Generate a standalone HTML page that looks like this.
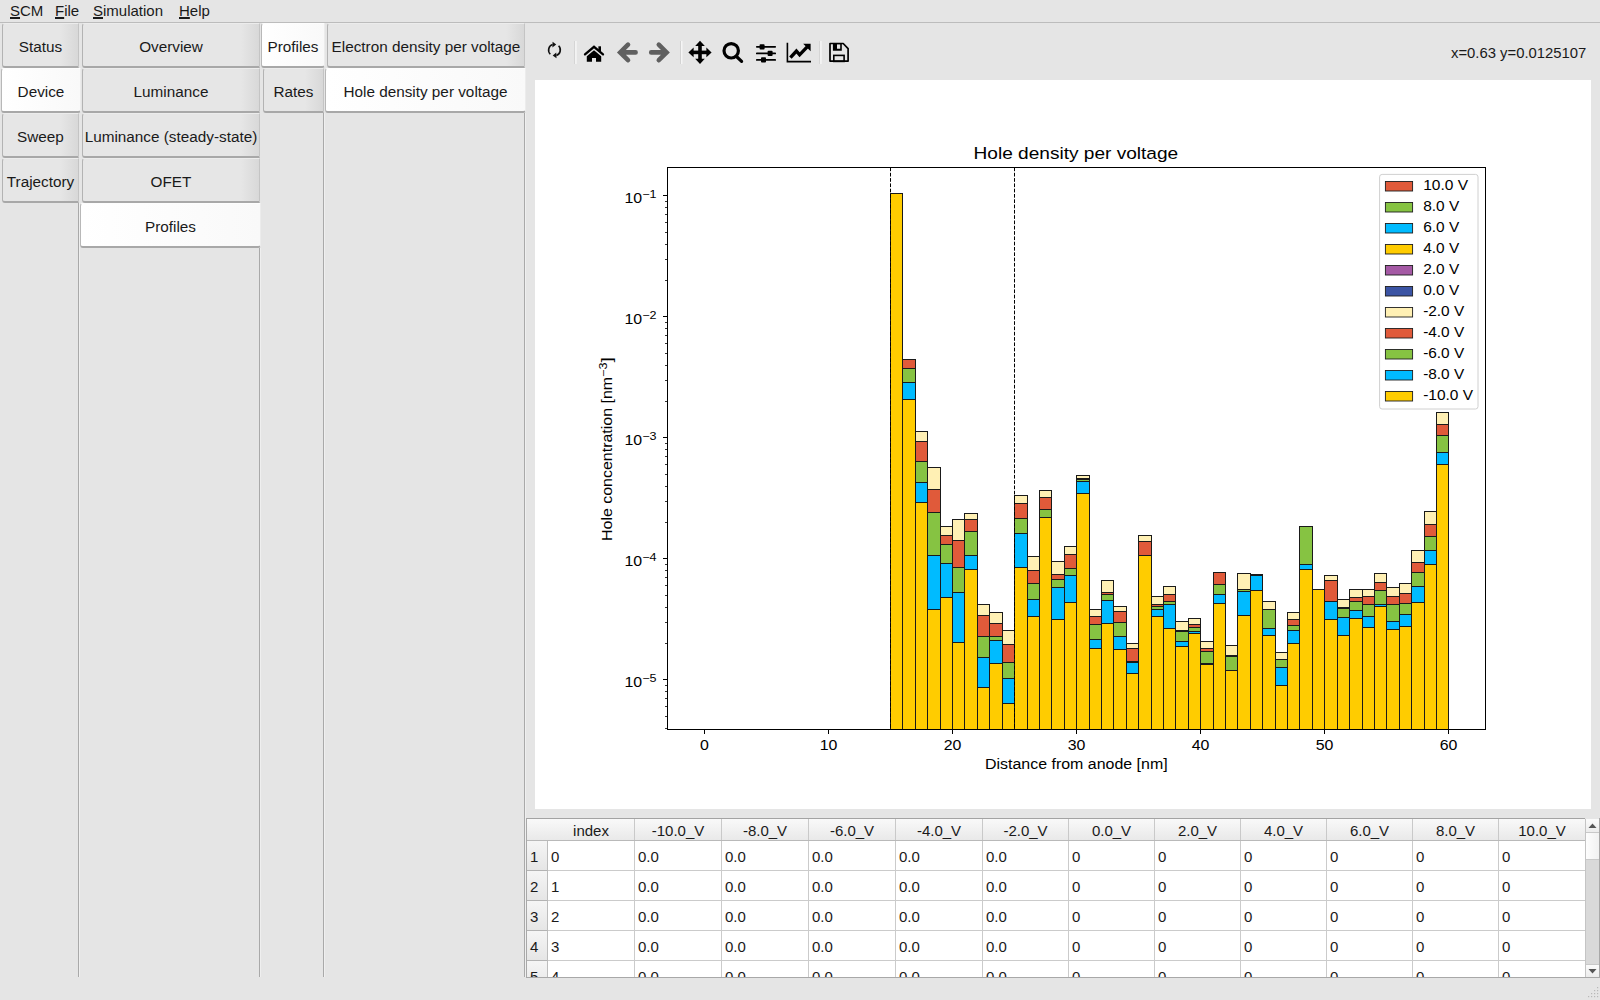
<!DOCTYPE html>
<html><head><meta charset="utf-8">
<style>
*{margin:0;padding:0;box-sizing:border-box}
html,body{width:1600px;height:1000px;overflow:hidden;background:#e5e5e5;font-family:"Liberation Sans",sans-serif;color:#1a1a1a}
.abs{position:absolute}
#menu{position:absolute;left:0;top:0;width:1600px;height:22px;font-size:15px}
#menu span{position:absolute;top:2px}
#menu u{text-decoration:underline;text-underline-offset:1px;text-decoration-thickness:1.5px}
.tab{position:absolute;font-size:15.3px;text-align:center;white-space:nowrap;overflow:hidden;
 background:linear-gradient(to right,#e6e6e6 0%,#e6e6e6 calc(100% - 18px),#d8d8d8 100%);
 border-left:1px solid #b3b3b3;border-right:1px solid #c4c4c4;border-bottom:2px solid #a8a8a8;border-top:1px solid #ececec;border-radius:3px 0 0 3px}
.tab.sel{background:linear-gradient(to right,#ffffff 0%,#f9f9f9 100%);border-left:1px solid #b8b8b8;border-right:1px solid #ececec;border-bottom:2px solid #a8a8a8;border-top:1px solid #fdfdfd;border-radius:3px 0 3px 3px}
.vline2{position:absolute;width:1px;background:#efefef}
.vline{position:absolute;width:1px;background:#a9a9a9}
#canvas{position:absolute;left:535px;top:80px;width:1056px;height:729px;background:#fff}
#table{position:absolute;left:526px;top:818px;width:1059px;height:159px;background:#fff;border-left:1px solid #a8a8a8;border-top:1px solid #a3a3a3;overflow:hidden}
.hdrbg{position:absolute;left:0;top:0;width:1100px;height:22px;background:linear-gradient(#f9f9f9,#e9e9e9);border-bottom:1px solid #b9b9b9}
.th{position:absolute;top:0px;height:21px;line-height:24px;font-size:15px;text-align:center;border-right:1px solid #c9c9c9}
.rh{position:absolute;left:0px;width:21px;height:30px;line-height:32px;font-size:15px;padding-left:3px;background:linear-gradient(#f5f5f5,#e6e6e6);border-bottom:1px solid #b3b3b3;border-right:1px solid #bdbdbd}
.td{position:absolute;height:30px;line-height:32px;font-size:15px;padding-left:3px;border-right:1px solid #cbcbcb;border-bottom:1px solid #cbcbcb;background:#fff}
</style></head><body>
<div class="abs" style="left:0;top:22px;width:1600px;height:1px;background:#bcbcbc"></div>
<div id="menu">
<span style="left:10px"><u>S</u>CM</span>
<span style="left:55px"><u>F</u>ile</span>
<span style="left:93px"><u>S</u>imulation</span>
<span style="left:179px"><u>H</u>elp</span>
</div>
<div class="vline" style="left:78px;top:203px;height:774px"></div>
<div class="vline2" style="left:79px;top:203px;height:774px"></div>
<div class="vline" style="left:259px;top:248px;height:729px"></div>
<div class="vline2" style="left:260px;top:248px;height:729px"></div>
<div class="vline" style="left:323px;top:113px;height:864px"></div>
<div class="vline2" style="left:324px;top:113px;height:864px"></div>
<div class="vline" style="left:524px;top:113px;height:864px"></div>
<div class="vline2" style="left:525px;top:113px;height:864px"></div>
<div class="tab" style="left:2px;top:23px;width:77px;height:45px;line-height:45px">Status</div>
<div class="tab sel" style="left:1px;top:68px;width:80px;height:45px;line-height:45px">Device</div>
<div class="tab" style="left:2px;top:113px;width:77px;height:45px;line-height:45px">Sweep</div>
<div class="tab" style="left:2px;top:158px;width:77px;height:45px;line-height:45px">Trajectory</div>
<div class="tab" style="left:82px;top:23px;width:178px;height:45px;line-height:45px">Overview</div>
<div class="tab" style="left:82px;top:68px;width:178px;height:45px;line-height:45px">Luminance</div>
<div class="tab" style="left:82px;top:113px;width:178px;height:45px;line-height:45px">Luminance (steady-state)</div>
<div class="tab" style="left:82px;top:158px;width:178px;height:45px;line-height:45px">OFET</div>
<div class="tab sel" style="left:80px;top:203px;width:181px;height:45px;line-height:45px">Profiles</div>
<div class="tab sel" style="left:261px;top:23px;width:64px;height:45px;line-height:45px">Profiles</div>
<div class="tab" style="left:263px;top:68px;width:61px;height:45px;line-height:45px">Rates</div>
<div class="tab" style="left:327px;top:23px;width:198px;height:45px;line-height:45px">Electron density per voltage</div>
<div class="tab sel" style="left:325px;top:68px;width:201px;height:45px;line-height:45px">Hole density per voltage</div>
<div id="canvas"></div>
<div id="table"><div class="hdrbg"></div>
<div class="th" style="left:21px;width:87px">index</div>
<div class="th" style="left:108px;width:87px">-10.0_V</div>
<div class="th" style="left:195px;width:87px">-8.0_V</div>
<div class="th" style="left:282px;width:87px">-6.0_V</div>
<div class="th" style="left:369px;width:87px">-4.0_V</div>
<div class="th" style="left:456px;width:86px">-2.0_V</div>
<div class="th" style="left:542px;width:86px">0.0_V</div>
<div class="th" style="left:628px;width:86px">2.0_V</div>
<div class="th" style="left:714px;width:86px">4.0_V</div>
<div class="th" style="left:800px;width:86px">6.0_V</div>
<div class="th" style="left:886px;width:86px">8.0_V</div>
<div class="th" style="left:972px;width:87px">10.0_V</div>
<div class="rh" style="top:22px">1</div>
<div class="td" style="left:21px;top:22px;width:87px">0</div>
<div class="td" style="left:108px;top:22px;width:87px">0.0</div>
<div class="td" style="left:195px;top:22px;width:87px">0.0</div>
<div class="td" style="left:282px;top:22px;width:87px">0.0</div>
<div class="td" style="left:369px;top:22px;width:87px">0.0</div>
<div class="td" style="left:456px;top:22px;width:86px">0.0</div>
<div class="td" style="left:542px;top:22px;width:86px">0</div>
<div class="td" style="left:628px;top:22px;width:86px">0</div>
<div class="td" style="left:714px;top:22px;width:86px">0</div>
<div class="td" style="left:800px;top:22px;width:86px">0</div>
<div class="td" style="left:886px;top:22px;width:86px">0</div>
<div class="td" style="left:972px;top:22px;width:87px">0</div>
<div class="rh" style="top:52px">2</div>
<div class="td" style="left:21px;top:52px;width:87px">1</div>
<div class="td" style="left:108px;top:52px;width:87px">0.0</div>
<div class="td" style="left:195px;top:52px;width:87px">0.0</div>
<div class="td" style="left:282px;top:52px;width:87px">0.0</div>
<div class="td" style="left:369px;top:52px;width:87px">0.0</div>
<div class="td" style="left:456px;top:52px;width:86px">0.0</div>
<div class="td" style="left:542px;top:52px;width:86px">0</div>
<div class="td" style="left:628px;top:52px;width:86px">0</div>
<div class="td" style="left:714px;top:52px;width:86px">0</div>
<div class="td" style="left:800px;top:52px;width:86px">0</div>
<div class="td" style="left:886px;top:52px;width:86px">0</div>
<div class="td" style="left:972px;top:52px;width:87px">0</div>
<div class="rh" style="top:82px">3</div>
<div class="td" style="left:21px;top:82px;width:87px">2</div>
<div class="td" style="left:108px;top:82px;width:87px">0.0</div>
<div class="td" style="left:195px;top:82px;width:87px">0.0</div>
<div class="td" style="left:282px;top:82px;width:87px">0.0</div>
<div class="td" style="left:369px;top:82px;width:87px">0.0</div>
<div class="td" style="left:456px;top:82px;width:86px">0.0</div>
<div class="td" style="left:542px;top:82px;width:86px">0</div>
<div class="td" style="left:628px;top:82px;width:86px">0</div>
<div class="td" style="left:714px;top:82px;width:86px">0</div>
<div class="td" style="left:800px;top:82px;width:86px">0</div>
<div class="td" style="left:886px;top:82px;width:86px">0</div>
<div class="td" style="left:972px;top:82px;width:87px">0</div>
<div class="rh" style="top:112px">4</div>
<div class="td" style="left:21px;top:112px;width:87px">3</div>
<div class="td" style="left:108px;top:112px;width:87px">0.0</div>
<div class="td" style="left:195px;top:112px;width:87px">0.0</div>
<div class="td" style="left:282px;top:112px;width:87px">0.0</div>
<div class="td" style="left:369px;top:112px;width:87px">0.0</div>
<div class="td" style="left:456px;top:112px;width:86px">0.0</div>
<div class="td" style="left:542px;top:112px;width:86px">0</div>
<div class="td" style="left:628px;top:112px;width:86px">0</div>
<div class="td" style="left:714px;top:112px;width:86px">0</div>
<div class="td" style="left:800px;top:112px;width:86px">0</div>
<div class="td" style="left:886px;top:112px;width:86px">0</div>
<div class="td" style="left:972px;top:112px;width:87px">0</div>
<div class="rh" style="top:142px">5</div>
<div class="td" style="left:21px;top:142px;width:87px">4</div>
<div class="td" style="left:108px;top:142px;width:87px">0.0</div>
<div class="td" style="left:195px;top:142px;width:87px">0.0</div>
<div class="td" style="left:282px;top:142px;width:87px">0.0</div>
<div class="td" style="left:369px;top:142px;width:87px">0.0</div>
<div class="td" style="left:456px;top:142px;width:86px">0.0</div>
<div class="td" style="left:542px;top:142px;width:86px">0</div>
<div class="td" style="left:628px;top:142px;width:86px">0</div>
<div class="td" style="left:714px;top:142px;width:86px">0</div>
<div class="td" style="left:800px;top:142px;width:86px">0</div>
<div class="td" style="left:886px;top:142px;width:86px">0</div>
<div class="td" style="left:972px;top:142px;width:87px">0</div></div>
<div class="abs" style="left:1585px;top:819px;width:14px;height:158px;background:#d9d9d9;border-left:1px solid #c4c4c4"></div>
<div class="abs" style="left:1586px;top:819px;width:13px;height:14px;background:linear-gradient(#fbfbfb,#ececec);border-bottom:1px solid #c8c8c8"></div>
<div class="abs" style="left:1586px;top:833px;width:13px;height:27px;background:linear-gradient(to right,#fdfdfd,#f1f1f1);border-bottom:1px solid #c8c8c8"></div>
<div class="abs" style="left:1586px;top:964px;width:13px;height:13px;background:linear-gradient(#fbfbfb,#ececec);border-top:1px solid #c8c8c8"></div>
<svg class="abs" style="left:1585px;top:819px" width="15" height="158"><path d="M3.5,9 L7.5,4.5 L11.5,9 Z" fill="#555"/><path d="M3.5,150 L7.5,154.5 L11.5,150 Z" fill="#555"/></svg>
<div class="abs" style="left:1599px;top:818px;width:1px;height:160px;background:#a8a8a8"></div>
<div class="abs" style="left:526px;top:977px;width:1074px;height:1px;background:#a8a8a8"></div>
<svg class="abs" style="left:1586px;top:984px" width="14" height="16"><g fill="#b8b8b8"><rect x="11" y="3" width="1.2" height="1.2"/><rect x="8" y="6" width="1.2" height="1.2"/><rect x="11" y="6" width="1.2" height="1.2"/><rect x="5" y="9" width="1.2" height="1.2"/><rect x="8" y="9" width="1.2" height="1.2"/><rect x="11" y="9" width="1.2" height="1.2"/><rect x="2" y="12" width="1.2" height="1.2"/><rect x="5" y="12" width="1.2" height="1.2"/><rect x="8" y="12" width="1.2" height="1.2"/><rect x="11" y="12" width="1.2" height="1.2"/></g></svg>

<svg width="1600" height="100" style="position:absolute;left:0;top:0">
<!-- separators -->
<g>
<rect x="574.3" y="41" width="1" height="23" fill="#cfcfcf"/><rect x="575.3" y="41" width="1.2" height="23" fill="#fbfbfb"/>
<rect x="680.2" y="41" width="1" height="23" fill="#cfcfcf"/><rect x="681.2" y="41" width="1.2" height="23" fill="#fbfbfb"/>
<rect x="819.3" y="41" width="1" height="23" fill="#cfcfcf"/><rect x="820.3" y="41" width="1.2" height="23" fill="#fbfbfb"/>
</g>
<!-- refresh -->
<g fill="none" stroke="#111" stroke-width="1.6">
<path d="M552.6,44.6 A5.8,5.8 0 0 0 550.3,54.2"/>
<path d="M556.4,55.4 A5.8,5.8 0 0 0 558.6,45.8"/>
</g>
<path d="M552.6,41.8 L556.2,44.6 L552.4,47.4 Z" fill="#111"/>
<path d="M556.3,52.6 L552.7,55.4 L556.5,58.2 Z" fill="#111"/>
<!-- home -->
<path d="M585,54.4 L594,46.8 L603,54.4" fill="none" stroke="#000" stroke-width="2.3" stroke-linecap="round" stroke-linejoin="miter"/>
<rect x="598.4" y="46.3" width="2.6" height="5" fill="#000"/>
<path d="M594,50.3 L601.2,56.3 L601.2,61.8 L596,61.8 L596,57.9 L592,57.9 L592,61.8 L586.8,61.8 L586.8,56.3 Z" fill="#000"/>
<!-- back / forward -->
<g fill="none" stroke="#606060" stroke-width="4.6" stroke-linecap="round" stroke-linejoin="miter">
<path d="M628,44.6 L620.2,52.4 L628,60.2 M621,52.4 L635.6,52.4"/>
<path d="M658.8,44.6 L666.6,52.4 L658.8,60.2 M665.8,52.4 L651.2,52.4"/>
</g>
<!-- move -->
<g fill="#000">
<rect x="698.2" y="44" width="3.6" height="17"/>
<rect x="691" y="50.6" width="18" height="3.6"/>
<path d="M700,40.8 L704.8,46 L695.2,46 Z"/>
<path d="M700,64 L704.8,58.8 L695.2,58.8 Z"/>
<path d="M688.4,52.4 L693.6,47.6 L693.6,57.2 Z"/>
<path d="M711.6,52.4 L706.4,47.6 L706.4,57.2 Z"/>
</g>
<!-- zoom -->
<circle cx="731.2" cy="50.8" r="7.2" fill="none" stroke="#000" stroke-width="3.2"/>
<path d="M737,57 L741.6,61.4" stroke="#000" stroke-width="3.2" stroke-linecap="round"/>
<!-- sliders -->
<g stroke="#000" stroke-width="1.7" stroke-linecap="round">
<path d="M756.8,46.8 L775.2,46.8 M756.8,53.4 L775.2,53.4 M756.8,59.9 L775.2,59.9"/>
</g>
<g fill="#000">
<rect x="759.6" y="44.2" width="5" height="5.2" rx="0.9"/>
<rect x="767.6" y="50.8" width="5" height="5.2" rx="0.9"/>
<rect x="761" y="57.3" width="5" height="5.2" rx="0.9"/>
</g>
<!-- chart -->
<path d="M787.4,42.8 L787.4,61.6 L811,61.6" fill="none" stroke="#000" stroke-width="1.6"/>
<path d="M790.4,57.6 L796.4,51 L799.6,54.8 L807.2,46.8" fill="none" stroke="#000" stroke-width="3.4" stroke-linejoin="miter"/>
<path d="M803.2,43.8 L810.6,43.8 L810.6,51.2 Z" fill="#000"/>
<!-- save -->
<path d="M830,43.5 L843.2,43.5 L848.1,48.6 L848.1,61.1 L830,61.1 Z" fill="none" stroke="#000" stroke-width="1.7" stroke-linejoin="round"/>
<path d="M832.9,43.2 L841.8,43.2 L841.8,50.7 L832.9,50.7 Z M837,44.2 L837,48.8 L840.2,48.8 L840.2,44.2 Z" fill="#000" fill-rule="evenodd"/>
<rect x="833.8" y="55.4" width="10.3" height="6" fill="none" stroke="#000" stroke-width="1.6"/>
</svg>
<div class="abs" style="left:1451px;top:45px;font-size:14.85px;white-space:nowrap">x=0.63 y=0.0125107</div>
<svg width="1600" height="1000" viewBox="0 0 1600 1000" style="position:absolute;left:0;top:0">
<g stroke="#1a1a1a" stroke-width="1">
<rect x="890.50" y="193.50" width="12.00" height="536.00" fill="#ffcc00"/>
<rect x="902.50" y="399.50" width="13.00" height="330.00" fill="#ffcc00"/>
<rect x="902.50" y="382.50" width="13.00" height="17.00" fill="#00bbff"/>
<rect x="902.50" y="368.50" width="13.00" height="14.00" fill="#86c342"/>
<rect x="902.50" y="359.50" width="13.00" height="9.00" fill="#e05a3a"/>
<rect x="915.50" y="502.50" width="12.00" height="227.00" fill="#ffcc00"/>
<rect x="915.50" y="482.50" width="12.00" height="20.00" fill="#00bbff"/>
<rect x="915.50" y="461.50" width="12.00" height="21.00" fill="#86c342"/>
<rect x="915.50" y="441.50" width="12.00" height="20.00" fill="#e05a3a"/>
<rect x="915.50" y="431.50" width="12.00" height="10.00" fill="#fff0b4"/>
<rect x="927.50" y="609.50" width="13.00" height="120.00" fill="#ffcc00"/>
<rect x="927.50" y="555.50" width="13.00" height="54.00" fill="#00bbff"/>
<rect x="927.50" y="512.50" width="13.00" height="43.00" fill="#86c342"/>
<rect x="927.50" y="489.50" width="13.00" height="23.00" fill="#e05a3a"/>
<rect x="927.50" y="467.50" width="13.00" height="22.00" fill="#fff0b4"/>
<rect x="940.50" y="597.50" width="12.00" height="132.00" fill="#ffcc00"/>
<rect x="940.50" y="563.50" width="12.00" height="34.00" fill="#00bbff"/>
<rect x="940.50" y="544.50" width="12.00" height="19.00" fill="#86c342"/>
<rect x="940.50" y="535.50" width="12.00" height="9.00" fill="#e05a3a"/>
<rect x="940.50" y="526.50" width="12.00" height="9.00" fill="#fff0b4"/>
<rect x="952.50" y="642.50" width="12.00" height="87.00" fill="#ffcc00"/>
<rect x="952.50" y="592.50" width="12.00" height="50.00" fill="#00bbff"/>
<rect x="952.50" y="567.50" width="12.00" height="25.00" fill="#86c342"/>
<rect x="952.50" y="540.50" width="12.00" height="27.00" fill="#e05a3a"/>
<rect x="952.50" y="519.50" width="12.00" height="21.00" fill="#fff0b4"/>
<rect x="964.50" y="569.50" width="13.00" height="160.00" fill="#ffcc00"/>
<rect x="964.50" y="555.50" width="13.00" height="14.00" fill="#00bbff"/>
<rect x="964.50" y="531.50" width="13.00" height="24.00" fill="#86c342"/>
<rect x="964.50" y="519.50" width="13.00" height="12.00" fill="#e05a3a"/>
<rect x="964.50" y="513.50" width="13.00" height="6.00" fill="#fff0b4"/>
<rect x="977.50" y="687.50" width="12.00" height="42.00" fill="#ffcc00"/>
<rect x="977.50" y="657.50" width="12.00" height="30.00" fill="#00bbff"/>
<rect x="977.50" y="636.50" width="12.00" height="21.00" fill="#86c342"/>
<rect x="977.50" y="615.50" width="12.00" height="21.00" fill="#e05a3a"/>
<rect x="977.50" y="604.50" width="12.00" height="11.00" fill="#fff0b4"/>
<rect x="989.50" y="663.50" width="13.00" height="66.00" fill="#ffcc00"/>
<rect x="989.50" y="640.50" width="13.00" height="23.00" fill="#00bbff"/>
<rect x="989.50" y="636.50" width="13.00" height="4.00" fill="#86c342"/>
<rect x="989.50" y="623.50" width="13.00" height="13.00" fill="#e05a3a"/>
<rect x="989.50" y="612.50" width="13.00" height="11.00" fill="#fff0b4"/>
<rect x="1002.50" y="703.50" width="12.00" height="26.00" fill="#ffcc00"/>
<rect x="1002.50" y="678.50" width="12.00" height="25.00" fill="#00bbff"/>
<rect x="1002.50" y="662.50" width="12.00" height="16.00" fill="#86c342"/>
<rect x="1002.50" y="644.50" width="12.00" height="18.00" fill="#e05a3a"/>
<rect x="1002.50" y="630.50" width="12.00" height="14.00" fill="#fff0b4"/>
<rect x="1014.50" y="567.50" width="13.00" height="162.00" fill="#ffcc00"/>
<rect x="1014.50" y="533.50" width="13.00" height="34.00" fill="#00bbff"/>
<rect x="1014.50" y="518.50" width="13.00" height="15.00" fill="#86c342"/>
<rect x="1014.50" y="503.50" width="13.00" height="15.00" fill="#e05a3a"/>
<rect x="1014.50" y="495.50" width="13.00" height="8.00" fill="#fff0b4"/>
<rect x="1027.50" y="616.50" width="12.00" height="113.00" fill="#ffcc00"/>
<rect x="1027.50" y="599.50" width="12.00" height="17.00" fill="#00bbff"/>
<rect x="1027.50" y="583.50" width="12.00" height="16.00" fill="#86c342"/>
<rect x="1027.50" y="570.50" width="12.00" height="13.00" fill="#e05a3a"/>
<rect x="1027.50" y="556.50" width="12.00" height="14.00" fill="#fff0b4"/>
<rect x="1039.50" y="517.50" width="12.00" height="212.00" fill="#ffcc00"/>
<rect x="1039.50" y="509.50" width="12.00" height="8.00" fill="#86c342"/>
<rect x="1039.50" y="497.50" width="12.00" height="12.00" fill="#e05a3a"/>
<rect x="1039.50" y="490.50" width="12.00" height="7.00" fill="#fff0b4"/>
<rect x="1051.50" y="619.50" width="13.00" height="110.00" fill="#ffcc00"/>
<rect x="1051.50" y="587.50" width="13.00" height="32.00" fill="#00bbff"/>
<rect x="1051.50" y="579.50" width="13.00" height="8.00" fill="#86c342"/>
<rect x="1051.50" y="574.50" width="13.00" height="5.00" fill="#e05a3a"/>
<rect x="1051.50" y="561.50" width="13.00" height="13.00" fill="#fff0b4"/>
<rect x="1064.50" y="602.50" width="12.00" height="127.00" fill="#ffcc00"/>
<rect x="1064.50" y="575.50" width="12.00" height="27.00" fill="#00bbff"/>
<rect x="1064.50" y="568.50" width="12.00" height="7.00" fill="#86c342"/>
<rect x="1064.50" y="554.50" width="12.00" height="14.00" fill="#e05a3a"/>
<rect x="1064.50" y="546.50" width="12.00" height="8.00" fill="#fff0b4"/>
<rect x="1076.50" y="493.50" width="13.00" height="236.00" fill="#ffcc00"/>
<rect x="1076.50" y="481.50" width="13.00" height="12.00" fill="#00bbff"/>
<rect x="1076.50" y="479.50" width="13.00" height="2.00" fill="#86c342"/>
<rect x="1076.50" y="478.50" width="13.00" height="1.00" fill="#e05a3a"/>
<rect x="1076.50" y="475.50" width="13.00" height="3.00" fill="#fff0b4"/>
<rect x="1089.50" y="648.50" width="12.00" height="81.00" fill="#ffcc00"/>
<rect x="1089.50" y="639.50" width="12.00" height="9.00" fill="#00bbff"/>
<rect x="1089.50" y="624.50" width="12.00" height="15.00" fill="#86c342"/>
<rect x="1089.50" y="616.50" width="12.00" height="8.00" fill="#e05a3a"/>
<rect x="1089.50" y="609.50" width="12.00" height="7.00" fill="#fff0b4"/>
<rect x="1101.50" y="623.50" width="12.00" height="106.00" fill="#ffcc00"/>
<rect x="1101.50" y="600.50" width="12.00" height="23.00" fill="#00bbff"/>
<rect x="1101.50" y="594.50" width="12.00" height="6.00" fill="#86c342"/>
<rect x="1101.50" y="592.50" width="12.00" height="2.00" fill="#e05a3a"/>
<rect x="1101.50" y="580.50" width="12.00" height="12.00" fill="#fff0b4"/>
<rect x="1113.50" y="649.50" width="13.00" height="80.00" fill="#ffcc00"/>
<rect x="1113.50" y="636.50" width="13.00" height="13.00" fill="#00bbff"/>
<rect x="1113.50" y="622.50" width="13.00" height="14.00" fill="#86c342"/>
<rect x="1113.50" y="611.50" width="13.00" height="11.00" fill="#e05a3a"/>
<rect x="1113.50" y="606.50" width="13.00" height="5.00" fill="#fff0b4"/>
<rect x="1126.50" y="673.50" width="12.00" height="56.00" fill="#ffcc00"/>
<rect x="1126.50" y="662.50" width="12.00" height="11.00" fill="#00bbff"/>
<rect x="1126.50" y="661.50" width="12.00" height="1.00" fill="#86c342"/>
<rect x="1126.50" y="648.50" width="12.00" height="13.00" fill="#e05a3a"/>
<rect x="1126.50" y="643.50" width="12.00" height="5.00" fill="#fff0b4"/>
<rect x="1138.50" y="555.50" width="13.00" height="174.00" fill="#ffcc00"/>
<rect x="1138.50" y="541.50" width="13.00" height="14.00" fill="#e05a3a"/>
<rect x="1138.50" y="535.50" width="13.00" height="6.00" fill="#fff0b4"/>
<rect x="1151.50" y="616.50" width="12.00" height="113.00" fill="#ffcc00"/>
<rect x="1151.50" y="609.50" width="12.00" height="7.00" fill="#00bbff"/>
<rect x="1151.50" y="606.50" width="12.00" height="3.00" fill="#86c342"/>
<rect x="1151.50" y="604.50" width="12.00" height="2.00" fill="#e05a3a"/>
<rect x="1151.50" y="596.50" width="12.00" height="8.00" fill="#fff0b4"/>
<rect x="1163.50" y="628.50" width="12.00" height="101.00" fill="#ffcc00"/>
<rect x="1163.50" y="604.50" width="12.00" height="24.00" fill="#00bbff"/>
<rect x="1163.50" y="601.50" width="12.00" height="3.00" fill="#86c342"/>
<rect x="1163.50" y="594.50" width="12.00" height="7.00" fill="#e05a3a"/>
<rect x="1163.50" y="586.50" width="12.00" height="8.00" fill="#fff0b4"/>
<rect x="1175.50" y="646.50" width="13.00" height="83.00" fill="#ffcc00"/>
<rect x="1175.50" y="641.50" width="13.00" height="5.00" fill="#00bbff"/>
<rect x="1175.50" y="631.50" width="13.00" height="10.00" fill="#86c342"/>
<rect x="1175.50" y="630.50" width="13.00" height="1.00" fill="#e05a3a"/>
<rect x="1175.50" y="621.50" width="13.00" height="9.00" fill="#fff0b4"/>
<rect x="1188.50" y="633.50" width="12.00" height="96.00" fill="#ffcc00"/>
<rect x="1188.50" y="631.50" width="12.00" height="2.00" fill="#00bbff"/>
<rect x="1188.50" y="627.50" width="12.00" height="4.00" fill="#86c342"/>
<rect x="1188.50" y="624.50" width="12.00" height="3.00" fill="#e05a3a"/>
<rect x="1188.50" y="618.50" width="12.00" height="6.00" fill="#fff0b4"/>
<rect x="1200.50" y="664.50" width="13.00" height="65.00" fill="#ffcc00"/>
<rect x="1200.50" y="663.50" width="13.00" height="1.00" fill="#00bbff"/>
<rect x="1200.50" y="651.50" width="13.00" height="12.00" fill="#86c342"/>
<rect x="1200.50" y="648.50" width="13.00" height="3.00" fill="#e05a3a"/>
<rect x="1200.50" y="641.50" width="13.00" height="7.00" fill="#fff0b4"/>
<rect x="1213.50" y="603.50" width="12.00" height="126.00" fill="#ffcc00"/>
<rect x="1213.50" y="594.50" width="12.00" height="9.00" fill="#00bbff"/>
<rect x="1213.50" y="584.50" width="12.00" height="10.00" fill="#86c342"/>
<rect x="1213.50" y="572.50" width="12.00" height="12.00" fill="#e05a3a"/>
<rect x="1225.50" y="670.50" width="12.00" height="59.00" fill="#ffcc00"/>
<rect x="1225.50" y="656.50" width="12.00" height="14.00" fill="#86c342"/>
<rect x="1225.50" y="655.50" width="12.00" height="1.00" fill="#e05a3a"/>
<rect x="1225.50" y="645.50" width="12.00" height="10.00" fill="#fff0b4"/>
<rect x="1237.50" y="615.50" width="13.00" height="114.00" fill="#ffcc00"/>
<rect x="1237.50" y="591.50" width="13.00" height="24.00" fill="#00bbff"/>
<rect x="1237.50" y="589.50" width="13.00" height="2.00" fill="#86c342"/>
<rect x="1237.50" y="573.50" width="13.00" height="16.00" fill="#fff0b4"/>
<rect x="1250.50" y="590.50" width="12.00" height="139.00" fill="#ffcc00"/>
<rect x="1250.50" y="575.50" width="12.00" height="15.00" fill="#00bbff"/>
<rect x="1250.50" y="574.50" width="12.00" height="1.00" fill="#86c342"/>
<rect x="1262.50" y="635.50" width="13.00" height="94.00" fill="#ffcc00"/>
<rect x="1262.50" y="628.50" width="13.00" height="7.00" fill="#00bbff"/>
<rect x="1262.50" y="609.50" width="13.00" height="19.00" fill="#86c342"/>
<rect x="1262.50" y="601.50" width="13.00" height="8.00" fill="#fff0b4"/>
<rect x="1275.50" y="685.50" width="12.00" height="44.00" fill="#ffcc00"/>
<rect x="1275.50" y="667.50" width="12.00" height="18.00" fill="#00bbff"/>
<rect x="1275.50" y="659.50" width="12.00" height="8.00" fill="#86c342"/>
<rect x="1275.50" y="652.50" width="12.00" height="7.00" fill="#fff0b4"/>
<rect x="1287.50" y="643.50" width="12.00" height="86.00" fill="#ffcc00"/>
<rect x="1287.50" y="630.50" width="12.00" height="13.00" fill="#00bbff"/>
<rect x="1287.50" y="625.50" width="12.00" height="5.00" fill="#86c342"/>
<rect x="1287.50" y="619.50" width="12.00" height="6.00" fill="#e05a3a"/>
<rect x="1287.50" y="612.50" width="12.00" height="7.00" fill="#fff0b4"/>
<rect x="1299.50" y="569.50" width="13.00" height="160.00" fill="#ffcc00"/>
<rect x="1299.50" y="564.50" width="13.00" height="5.00" fill="#00bbff"/>
<rect x="1299.50" y="526.50" width="13.00" height="38.00" fill="#86c342"/>
<rect x="1312.50" y="589.50" width="12.00" height="140.00" fill="#ffcc00"/>
<rect x="1324.50" y="619.50" width="13.00" height="110.00" fill="#ffcc00"/>
<rect x="1324.50" y="601.50" width="13.00" height="18.00" fill="#00bbff"/>
<rect x="1324.50" y="580.50" width="13.00" height="21.00" fill="#e05a3a"/>
<rect x="1324.50" y="575.50" width="13.00" height="5.00" fill="#fff0b4"/>
<rect x="1337.50" y="635.50" width="12.00" height="94.00" fill="#ffcc00"/>
<rect x="1337.50" y="617.50" width="12.00" height="18.00" fill="#00bbff"/>
<rect x="1337.50" y="608.50" width="12.00" height="9.00" fill="#86c342"/>
<rect x="1337.50" y="607.50" width="12.00" height="1.00" fill="#e05a3a"/>
<rect x="1337.50" y="599.50" width="12.00" height="8.00" fill="#fff0b4"/>
<rect x="1349.50" y="618.50" width="13.00" height="111.00" fill="#ffcc00"/>
<rect x="1349.50" y="610.50" width="13.00" height="8.00" fill="#00bbff"/>
<rect x="1349.50" y="601.50" width="13.00" height="9.00" fill="#86c342"/>
<rect x="1349.50" y="597.50" width="13.00" height="4.00" fill="#e05a3a"/>
<rect x="1349.50" y="589.50" width="13.00" height="8.00" fill="#fff0b4"/>
<rect x="1362.50" y="627.50" width="12.00" height="102.00" fill="#ffcc00"/>
<rect x="1362.50" y="616.50" width="12.00" height="11.00" fill="#00bbff"/>
<rect x="1362.50" y="604.50" width="12.00" height="12.00" fill="#86c342"/>
<rect x="1362.50" y="596.50" width="12.00" height="8.00" fill="#e05a3a"/>
<rect x="1362.50" y="589.50" width="12.00" height="7.00" fill="#fff0b4"/>
<rect x="1374.50" y="606.50" width="12.00" height="123.00" fill="#ffcc00"/>
<rect x="1374.50" y="604.50" width="12.00" height="2.00" fill="#00bbff"/>
<rect x="1374.50" y="590.50" width="12.00" height="14.00" fill="#86c342"/>
<rect x="1374.50" y="582.50" width="12.00" height="8.00" fill="#e05a3a"/>
<rect x="1374.50" y="573.50" width="12.00" height="9.00" fill="#fff0b4"/>
<rect x="1386.50" y="629.50" width="13.00" height="100.00" fill="#ffcc00"/>
<rect x="1386.50" y="621.50" width="13.00" height="8.00" fill="#00bbff"/>
<rect x="1386.50" y="604.50" width="13.00" height="17.00" fill="#86c342"/>
<rect x="1386.50" y="596.50" width="13.00" height="8.00" fill="#e05a3a"/>
<rect x="1386.50" y="587.50" width="13.00" height="9.00" fill="#fff0b4"/>
<rect x="1399.50" y="626.50" width="12.00" height="103.00" fill="#ffcc00"/>
<rect x="1399.50" y="614.50" width="12.00" height="12.00" fill="#00bbff"/>
<rect x="1399.50" y="603.50" width="12.00" height="11.00" fill="#86c342"/>
<rect x="1399.50" y="593.50" width="12.00" height="10.00" fill="#e05a3a"/>
<rect x="1399.50" y="583.50" width="12.00" height="10.00" fill="#fff0b4"/>
<rect x="1411.50" y="602.50" width="13.00" height="127.00" fill="#ffcc00"/>
<rect x="1411.50" y="586.50" width="13.00" height="16.00" fill="#00bbff"/>
<rect x="1411.50" y="572.50" width="13.00" height="14.00" fill="#86c342"/>
<rect x="1411.50" y="562.50" width="13.00" height="10.00" fill="#e05a3a"/>
<rect x="1411.50" y="550.50" width="13.00" height="12.00" fill="#fff0b4"/>
<rect x="1424.50" y="564.50" width="12.00" height="165.00" fill="#ffcc00"/>
<rect x="1424.50" y="550.50" width="12.00" height="14.00" fill="#00bbff"/>
<rect x="1424.50" y="536.50" width="12.00" height="14.00" fill="#86c342"/>
<rect x="1424.50" y="524.50" width="12.00" height="12.00" fill="#e05a3a"/>
<rect x="1424.50" y="511.50" width="12.00" height="13.00" fill="#fff0b4"/>
<rect x="1436.50" y="464.50" width="12.00" height="265.00" fill="#ffcc00"/>
<rect x="1436.50" y="452.50" width="12.00" height="12.00" fill="#00bbff"/>
<rect x="1436.50" y="435.50" width="12.00" height="17.00" fill="#86c342"/>
<rect x="1436.50" y="424.50" width="12.00" height="11.00" fill="#e05a3a"/>
<rect x="1436.50" y="412.50" width="12.00" height="12.00" fill="#fff0b4"/>
</g>
<line x1="890.5" y1="167.5" x2="890.5" y2="729.5" stroke="#000" stroke-width="1" stroke-dasharray="3.7,1.6"/>
<line x1="1014.5" y1="167.5" x2="1014.5" y2="729.5" stroke="#000" stroke-width="1" stroke-dasharray="3.7,1.6"/>
<rect x="667.5" y="167.5" width="818.0" height="562.0" fill="none" stroke="#000" stroke-width="1"/>
<line x1="704.50" y1="729.5" x2="704.50" y2="734.0" stroke="#000" stroke-width="1"/>
<text x="704.50" y="749.80" font-size="13.89" text-anchor="middle" textLength="8.84" lengthAdjust="spacingAndGlyphs" font-family="Liberation Sans, sans-serif" fill="#000" >0</text>
<line x1="828.50" y1="729.5" x2="828.50" y2="734.0" stroke="#000" stroke-width="1"/>
<text x="828.50" y="749.80" font-size="13.89" text-anchor="middle" textLength="17.68" lengthAdjust="spacingAndGlyphs" font-family="Liberation Sans, sans-serif" fill="#000" >10</text>
<line x1="952.50" y1="729.5" x2="952.50" y2="734.0" stroke="#000" stroke-width="1"/>
<text x="952.50" y="749.80" font-size="13.89" text-anchor="middle" textLength="17.68" lengthAdjust="spacingAndGlyphs" font-family="Liberation Sans, sans-serif" fill="#000" >20</text>
<line x1="1076.50" y1="729.5" x2="1076.50" y2="734.0" stroke="#000" stroke-width="1"/>
<text x="1076.50" y="749.80" font-size="13.89" text-anchor="middle" textLength="17.68" lengthAdjust="spacingAndGlyphs" font-family="Liberation Sans, sans-serif" fill="#000" >30</text>
<line x1="1200.50" y1="729.5" x2="1200.50" y2="734.0" stroke="#000" stroke-width="1"/>
<text x="1200.50" y="749.80" font-size="13.89" text-anchor="middle" textLength="17.68" lengthAdjust="spacingAndGlyphs" font-family="Liberation Sans, sans-serif" fill="#000" >40</text>
<line x1="1324.50" y1="729.5" x2="1324.50" y2="734.0" stroke="#000" stroke-width="1"/>
<text x="1324.50" y="749.80" font-size="13.89" text-anchor="middle" textLength="17.68" lengthAdjust="spacingAndGlyphs" font-family="Liberation Sans, sans-serif" fill="#000" >50</text>
<line x1="1448.50" y1="729.5" x2="1448.50" y2="734.0" stroke="#000" stroke-width="1"/>
<text x="1448.50" y="749.80" font-size="13.89" text-anchor="middle" textLength="17.68" lengthAdjust="spacingAndGlyphs" font-family="Liberation Sans, sans-serif" fill="#000" >60</text>
<line x1="665.00" y1="728.50" x2="667.5" y2="728.50" stroke="#000" stroke-width="0.8"/>
<line x1="665.00" y1="716.50" x2="667.5" y2="716.50" stroke="#000" stroke-width="0.8"/>
<line x1="665.00" y1="706.50" x2="667.5" y2="706.50" stroke="#000" stroke-width="0.8"/>
<line x1="665.00" y1="698.50" x2="667.5" y2="698.50" stroke="#000" stroke-width="0.8"/>
<line x1="665.00" y1="691.50" x2="667.5" y2="691.50" stroke="#000" stroke-width="0.8"/>
<line x1="665.00" y1="685.50" x2="667.5" y2="685.50" stroke="#000" stroke-width="0.8"/>
<line x1="663.00" y1="679.50" x2="667.5" y2="679.50" stroke="#000" stroke-width="1"/>
<text x="624.50" y="686.80" font-size="13.89" text-anchor="start" textLength="17.68" lengthAdjust="spacingAndGlyphs" font-family="Liberation Sans, sans-serif" fill="#000" >10</text>
<text x="642.20" y="682.00" font-size="10.30" text-anchor="start" textLength="14.33" lengthAdjust="spacingAndGlyphs" font-family="Liberation Sans, sans-serif" fill="#000" >−5</text>
<line x1="665.00" y1="643.50" x2="667.5" y2="643.50" stroke="#000" stroke-width="0.8"/>
<line x1="665.00" y1="622.50" x2="667.5" y2="622.50" stroke="#000" stroke-width="0.8"/>
<line x1="665.00" y1="607.50" x2="667.5" y2="607.50" stroke="#000" stroke-width="0.8"/>
<line x1="665.00" y1="595.50" x2="667.5" y2="595.50" stroke="#000" stroke-width="0.8"/>
<line x1="665.00" y1="585.50" x2="667.5" y2="585.50" stroke="#000" stroke-width="0.8"/>
<line x1="665.00" y1="577.50" x2="667.5" y2="577.50" stroke="#000" stroke-width="0.8"/>
<line x1="665.00" y1="570.50" x2="667.5" y2="570.50" stroke="#000" stroke-width="0.8"/>
<line x1="665.00" y1="564.50" x2="667.5" y2="564.50" stroke="#000" stroke-width="0.8"/>
<line x1="663.00" y1="558.50" x2="667.5" y2="558.50" stroke="#000" stroke-width="1"/>
<text x="624.50" y="565.80" font-size="13.89" text-anchor="start" textLength="17.68" lengthAdjust="spacingAndGlyphs" font-family="Liberation Sans, sans-serif" fill="#000" >10</text>
<text x="642.20" y="561.00" font-size="10.30" text-anchor="start" textLength="14.33" lengthAdjust="spacingAndGlyphs" font-family="Liberation Sans, sans-serif" fill="#000" >−4</text>
<line x1="665.00" y1="522.50" x2="667.5" y2="522.50" stroke="#000" stroke-width="0.8"/>
<line x1="665.00" y1="501.50" x2="667.5" y2="501.50" stroke="#000" stroke-width="0.8"/>
<line x1="665.00" y1="486.50" x2="667.5" y2="486.50" stroke="#000" stroke-width="0.8"/>
<line x1="665.00" y1="474.50" x2="667.5" y2="474.50" stroke="#000" stroke-width="0.8"/>
<line x1="665.00" y1="464.50" x2="667.5" y2="464.50" stroke="#000" stroke-width="0.8"/>
<line x1="665.00" y1="456.50" x2="667.5" y2="456.50" stroke="#000" stroke-width="0.8"/>
<line x1="665.00" y1="449.50" x2="667.5" y2="449.50" stroke="#000" stroke-width="0.8"/>
<line x1="665.00" y1="443.50" x2="667.5" y2="443.50" stroke="#000" stroke-width="0.8"/>
<line x1="663.00" y1="437.50" x2="667.5" y2="437.50" stroke="#000" stroke-width="1"/>
<text x="624.50" y="444.80" font-size="13.89" text-anchor="start" textLength="17.68" lengthAdjust="spacingAndGlyphs" font-family="Liberation Sans, sans-serif" fill="#000" >10</text>
<text x="642.20" y="440.00" font-size="10.30" text-anchor="start" textLength="14.33" lengthAdjust="spacingAndGlyphs" font-family="Liberation Sans, sans-serif" fill="#000" >−3</text>
<line x1="665.00" y1="401.50" x2="667.5" y2="401.50" stroke="#000" stroke-width="0.8"/>
<line x1="665.00" y1="380.50" x2="667.5" y2="380.50" stroke="#000" stroke-width="0.8"/>
<line x1="665.00" y1="365.50" x2="667.5" y2="365.50" stroke="#000" stroke-width="0.8"/>
<line x1="665.00" y1="353.50" x2="667.5" y2="353.50" stroke="#000" stroke-width="0.8"/>
<line x1="665.00" y1="343.50" x2="667.5" y2="343.50" stroke="#000" stroke-width="0.8"/>
<line x1="665.00" y1="335.50" x2="667.5" y2="335.50" stroke="#000" stroke-width="0.8"/>
<line x1="665.00" y1="328.50" x2="667.5" y2="328.50" stroke="#000" stroke-width="0.8"/>
<line x1="665.00" y1="322.50" x2="667.5" y2="322.50" stroke="#000" stroke-width="0.8"/>
<line x1="663.00" y1="316.50" x2="667.5" y2="316.50" stroke="#000" stroke-width="1"/>
<text x="624.50" y="323.80" font-size="13.89" text-anchor="start" textLength="17.68" lengthAdjust="spacingAndGlyphs" font-family="Liberation Sans, sans-serif" fill="#000" >10</text>
<text x="642.20" y="319.00" font-size="10.30" text-anchor="start" textLength="14.33" lengthAdjust="spacingAndGlyphs" font-family="Liberation Sans, sans-serif" fill="#000" >−2</text>
<line x1="665.00" y1="280.50" x2="667.5" y2="280.50" stroke="#000" stroke-width="0.8"/>
<line x1="665.00" y1="259.50" x2="667.5" y2="259.50" stroke="#000" stroke-width="0.8"/>
<line x1="665.00" y1="244.50" x2="667.5" y2="244.50" stroke="#000" stroke-width="0.8"/>
<line x1="665.00" y1="232.50" x2="667.5" y2="232.50" stroke="#000" stroke-width="0.8"/>
<line x1="665.00" y1="222.50" x2="667.5" y2="222.50" stroke="#000" stroke-width="0.8"/>
<line x1="665.00" y1="214.50" x2="667.5" y2="214.50" stroke="#000" stroke-width="0.8"/>
<line x1="665.00" y1="207.50" x2="667.5" y2="207.50" stroke="#000" stroke-width="0.8"/>
<line x1="665.00" y1="201.50" x2="667.5" y2="201.50" stroke="#000" stroke-width="0.8"/>
<line x1="663.00" y1="195.50" x2="667.5" y2="195.50" stroke="#000" stroke-width="1"/>
<text x="624.50" y="202.80" font-size="13.89" text-anchor="start" textLength="17.68" lengthAdjust="spacingAndGlyphs" font-family="Liberation Sans, sans-serif" fill="#000" >10</text>
<text x="642.20" y="198.00" font-size="10.30" text-anchor="start" textLength="14.33" lengthAdjust="spacingAndGlyphs" font-family="Liberation Sans, sans-serif" fill="#000" >−1</text>
<text x="1075.90" y="159.00" font-size="16.67" text-anchor="middle" textLength="204.62" lengthAdjust="spacingAndGlyphs" font-family="Liberation Sans, sans-serif" fill="#000" >Hole density per voltage</text>
<text x="1076.30" y="768.70" font-size="13.89" text-anchor="middle" textLength="182.66" lengthAdjust="spacingAndGlyphs" font-family="Liberation Sans, sans-serif" fill="#000" >Distance from anode [nm]</text>
<g transform="translate(612.4,541) rotate(-90)"><text x="0.00" y="0.00" font-size="13.89" text-anchor="start" textLength="164.13" lengthAdjust="spacingAndGlyphs" font-family="Liberation Sans, sans-serif" fill="#000" >Hole concentration [nm</text><text x="164.13" y="-5.20" font-size="10.30" text-anchor="start" textLength="14.33" lengthAdjust="spacingAndGlyphs" font-family="Liberation Sans, sans-serif" fill="#000" >−3</text><text x="178.46" y="0.00" font-size="13.89" text-anchor="start" textLength="5.42" lengthAdjust="spacingAndGlyphs" font-family="Liberation Sans, sans-serif" fill="#000" >]</text></g>
<rect x="1379.6" y="174.4" width="98.4" height="234.6" rx="2.5" fill="#fff" fill-opacity="0.8" stroke="#d0d0d0" stroke-width="1"/>
<rect x="1385.4" y="181.50" width="27.2" height="9.5" fill="#e05a3a" stroke="#1e1e1e" stroke-width="0.9"/>
<text x="1423.20" y="190.10" font-size="13.89" text-anchor="start" textLength="44.85" lengthAdjust="spacingAndGlyphs" font-family="Liberation Sans, sans-serif" fill="#000" >10.0 V</text>
<rect x="1385.4" y="202.50" width="27.2" height="9.5" fill="#86c342" stroke="#1e1e1e" stroke-width="0.9"/>
<text x="1423.20" y="211.10" font-size="13.89" text-anchor="start" textLength="36.01" lengthAdjust="spacingAndGlyphs" font-family="Liberation Sans, sans-serif" fill="#000" >8.0 V</text>
<rect x="1385.4" y="223.50" width="27.2" height="9.5" fill="#00bbff" stroke="#1e1e1e" stroke-width="0.9"/>
<text x="1423.20" y="232.10" font-size="13.89" text-anchor="start" textLength="36.01" lengthAdjust="spacingAndGlyphs" font-family="Liberation Sans, sans-serif" fill="#000" >6.0 V</text>
<rect x="1385.4" y="244.50" width="27.2" height="9.5" fill="#ffcc00" stroke="#1e1e1e" stroke-width="0.9"/>
<text x="1423.20" y="253.10" font-size="13.89" text-anchor="start" textLength="36.01" lengthAdjust="spacingAndGlyphs" font-family="Liberation Sans, sans-serif" fill="#000" >4.0 V</text>
<rect x="1385.4" y="265.50" width="27.2" height="9.5" fill="#a459a4" stroke="#1e1e1e" stroke-width="0.9"/>
<text x="1423.20" y="274.10" font-size="13.89" text-anchor="start" textLength="36.01" lengthAdjust="spacingAndGlyphs" font-family="Liberation Sans, sans-serif" fill="#000" >2.0 V</text>
<rect x="1385.4" y="286.50" width="27.2" height="9.5" fill="#3b54a4" stroke="#1e1e1e" stroke-width="0.9"/>
<text x="1423.20" y="295.10" font-size="13.89" text-anchor="start" textLength="36.01" lengthAdjust="spacingAndGlyphs" font-family="Liberation Sans, sans-serif" fill="#000" >0.0 V</text>
<rect x="1385.4" y="307.50" width="27.2" height="9.5" fill="#fff0b4" stroke="#1e1e1e" stroke-width="0.9"/>
<text x="1423.20" y="316.10" font-size="13.89" text-anchor="start" textLength="41.02" lengthAdjust="spacingAndGlyphs" font-family="Liberation Sans, sans-serif" fill="#000" >-2.0 V</text>
<rect x="1385.4" y="328.50" width="27.2" height="9.5" fill="#e05a3a" stroke="#1e1e1e" stroke-width="0.9"/>
<text x="1423.20" y="337.10" font-size="13.89" text-anchor="start" textLength="41.02" lengthAdjust="spacingAndGlyphs" font-family="Liberation Sans, sans-serif" fill="#000" >-4.0 V</text>
<rect x="1385.4" y="349.50" width="27.2" height="9.5" fill="#86c342" stroke="#1e1e1e" stroke-width="0.9"/>
<text x="1423.20" y="358.10" font-size="13.89" text-anchor="start" textLength="41.02" lengthAdjust="spacingAndGlyphs" font-family="Liberation Sans, sans-serif" fill="#000" >-6.0 V</text>
<rect x="1385.4" y="370.50" width="27.2" height="9.5" fill="#00bbff" stroke="#1e1e1e" stroke-width="0.9"/>
<text x="1423.20" y="379.10" font-size="13.89" text-anchor="start" textLength="41.02" lengthAdjust="spacingAndGlyphs" font-family="Liberation Sans, sans-serif" fill="#000" >-8.0 V</text>
<rect x="1385.4" y="391.50" width="27.2" height="9.5" fill="#ffcc00" stroke="#1e1e1e" stroke-width="0.9"/>
<text x="1423.20" y="400.10" font-size="13.89" text-anchor="start" textLength="49.86" lengthAdjust="spacingAndGlyphs" font-family="Liberation Sans, sans-serif" fill="#000" >-10.0 V</text>
</svg>
</body></html>
